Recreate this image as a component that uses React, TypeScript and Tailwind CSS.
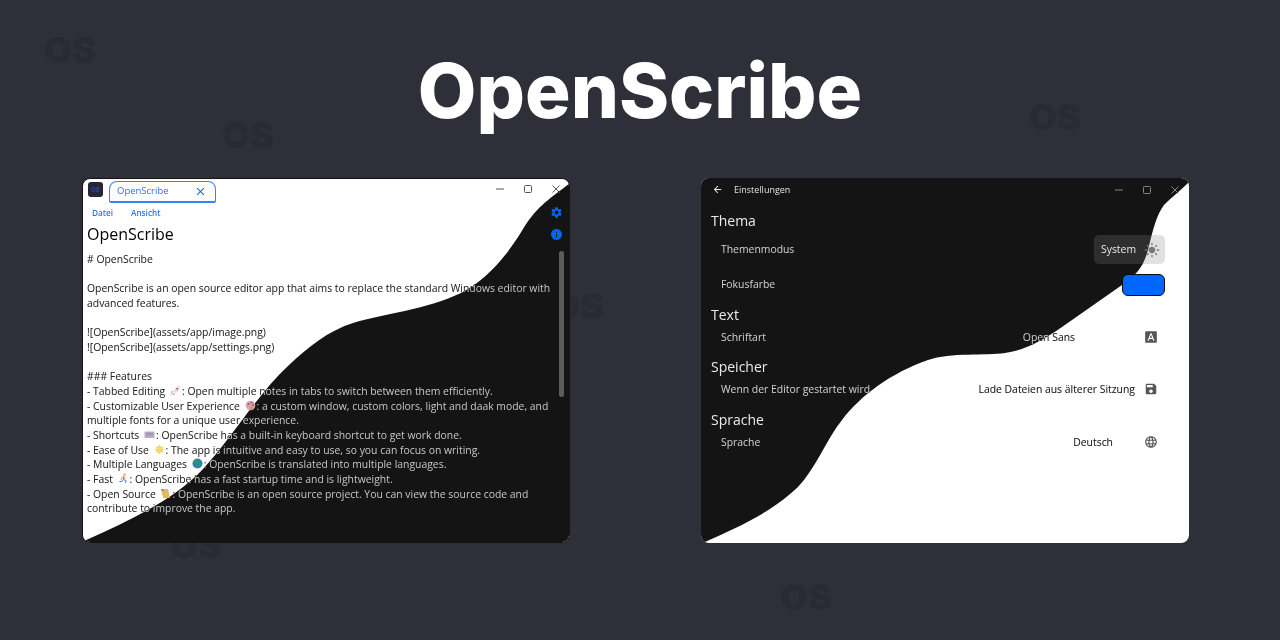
import React from "react";
import { MdSettings, MdInfo, MdClose, MdArrowBack, MdLightMode, MdFontDownload, MdSave, MdLanguage } from "react-icons/md";

const leftWave = "M1 362 C45 342 90 322 120 290 C150 258 172 218 205 187 C225 168 245 152 270 144 C300 135 345 130 378 114 C405 100 425 75 440 50 C455 25 470 18 488 3 L488 365 L0 365 Z";
const rightWave = "M4 364 C35 350 70 335 97 309 C115 290 125 262 141 242 C160 217 190 195 227 182 C250 174 285 178 304 175 C325 172 340 163 361 149 L421 107 C435 97 442 90 447 72 C452 52 455 38 463 27 C472 18 480 12 488 4 L488 0 L0 0 L0 365 Z";

function Blend({ className = "", children }: { className?: string; children: React.ReactNode }) {
  return <span className={`mix-blend-difference ${className}`}>{children}</span>;
}

function Wave({ d }: { d: string }) {
  return (
    <svg className="absolute inset-0" width="488" height="365" viewBox="0 0 488 365">
      <path d={d} fill="#141414" />
    </svg>
  );
}

const emoji = "inline-block align-[-1px] ml-[2px] mr-[1px]";
function Rocket() {
  return <svg width="11" height="11" viewBox="0 0 11 11" className={emoji}><path d="M10 1 C7 1 4 3 3 6 L5 8 C8 7 10 4 10 1Z" fill="#e8dfe6"/><path d="M3 6 L1 7 L2 8Z M5 8 L4 10 L3 9Z" fill="#d2456a"/><path d="M2 8 L3 9 L1 10Z" fill="#f08a3c"/><circle cx="7.2" cy="3.8" r="1" fill="#d2456a"/></svg>;
}
function Palette() {
  return <svg width="11" height="11" viewBox="0 0 11 11" className={emoji}><circle cx="5.5" cy="5.5" r="4.8" fill="#d8a7a0"/><circle cx="3.5" cy="4" r="1" fill="#c2435e"/><circle cx="6.5" cy="2.8" r="1" fill="#7e62b8"/><circle cx="8" cy="5.2" r="1" fill="#d2456a"/><circle cx="6.5" cy="8" r="1" fill="#6f8fc8"/></svg>;
}
function Keyboard() {
  return <svg width="11" height="11" viewBox="0 0 11 11" className={emoji}><rect x="0.5" y="2.5" width="10" height="6.5" rx="1" fill="#b5aec4"/><path d="M2 4.5H9M2 6H9" stroke="#8f88a4" strokeWidth="0.8"/></svg>;
}
function Sun() {
  return <svg width="11" height="11" viewBox="0 0 11 11" className={emoji}><path d="M5.5 0.5L6.5 3L9 2L8 4.5L10.5 5.5L8 6.5L9 9L6.5 8L5.5 10.5L4.5 8L2 9L3 6.5L0.5 5.5L3 4.5L2 2L4.5 3Z" fill="#f7c948"/><circle cx="5.5" cy="5.5" r="2.4" fill="#fbdc6a"/></svg>;
}
function Globe() {
  return <svg width="11" height="11" viewBox="0 0 11 11" className={emoji}><circle cx="5.5" cy="5.5" r="5" fill="#2f83a8"/><path d="M3 2 C5 1 7 2 6 4 C5 5 4 6 3 5 C2 4 2 3 3 2Z M7 6 C9 5 10 6 9 8 C8 9 7 9 7 6Z" fill="#2f9a5e"/></svg>;
}
function Runner() {
  return <svg width="11" height="11" viewBox="0 0 11 11" className={emoji}><circle cx="6.5" cy="1.8" r="1.2" fill="#e0a96d"/><path d="M6 3.5L4 5L3 7" stroke="#e8b04a" strokeWidth="1.2" fill="none"/><path d="M6 3.5L5.5 6.5L8 7.5L7.5 10M5.5 6.5L4 8.5L1.5 8.5" stroke="#4a7fc0" strokeWidth="1" fill="none"/><path d="M6 4.5L8.5 5.5" stroke="#e0a96d" strokeWidth="0.9"/></svg>;
}
function Scroll() {
  return <svg width="11" height="11" viewBox="0 0 11 11" className={emoji}><path d="M1 1H8L10 10H3Z" fill="#e2b765"/><path d="M1 1H3.5L4 3H1.5Z" fill="#c78f3c"/></svg>;
}

type Part = string | React.ReactNode;
const lines: (Part[] | null)[] = [
  ["# OpenScribe"],
  null,
  ["OpenScribe is an open source editor app that aims to replace the standard Windows editor with"],
  ["advanced features."],
  null,
  ["![OpenScribe](assets/app/image.png)"],
  ["![OpenScribe](assets/app/settings.png)"],
  null,
  ["### Features"],
  ["- Tabbed Editing ", <Rocket key="r" />, ": Open multiple notes in tabs to switch between them efficiently."],
  ["- Customizable User Experience ", <Palette key="p" />, ": a custom window, custom colors, light and daak mode, and"],
  ["multiple fonts for a unique user experience."],
  ["- Shortcuts ", <Keyboard key="k" />, ": OpenScribe has a built-in keyboard shortcut to get work done."],
  ["- Ease of Use ", <Sun key="s" />, ": The app is intuitive and easy to use, so you can focus on writing."],
  ["- Multiple Languages ", <Globe key="g" />, ": OpenScribe is translated into multiple languages."],
  ["- Fast ", <Runner key="f" />, ": OpenScribe has a fast startup time and is lightweight."],
  ["- Open Source ", <Scroll key="o" />, ": OpenScribe is an open source project. You can view the source code and"],
  ["contribute to improve the app."],
];

function Controls({ color }: { color: string }) {
  return (
    <div className="flex items-center gap-[16px] mix-blend-difference">
      <svg width="12" height="12" viewBox="0 0 12 12"><path d="M2 6H10" stroke={color} strokeWidth="1" /></svg>
      <svg width="12" height="12" viewBox="0 0 12 12"><rect x="2.5" y="2.5" width="7" height="7" rx="1" fill="none" stroke={color} strokeWidth="1" /></svg>
      <svg width="12" height="12" viewBox="0 0 12 12"><path d="M2.5 2.5L9.5 9.5M9.5 2.5L2.5 9.5" stroke={color} strokeWidth="1" /></svg>
    </div>
  );
}

function EditorWindow() {
  return (
    <div className="relative isolate w-[488px] h-[365px] rounded-lg overflow-hidden bg-white border border-[#141414] font-['Open_Sans',sans-serif]">
      <Wave d={leftWave} />
      <div className="relative flex flex-col -m-px">
        <div className="flex items-start h-[25px] pl-[6px] pt-[3px] pr-[7px]">
          <div className="flex items-center justify-center w-[15px] h-[15px] mt-[1px] rounded-[3px] bg-[#24243a] text-[6px] font-bold text-[#3345b5] font-['Inter',sans-serif]">OS</div>
          <div className="flex items-center justify-between w-[107px] h-[22px] ml-[6px] pl-[7px] pr-[8px] border-[1px] border-[#3b82f0] rounded-t-[8px] rounded-b-[2px] border-b-2 text-[9.5px] text-[#2a78e8]">
            <span>OpenScribe</span>
            <MdClose size={13} color="#1a6be0" />
          </div>
          <div className="ml-auto mt-[2px] mr-[1px]"><Controls color="#a8a8a8" /></div>
        </div>
        <div className="flex items-center gap-[18px] h-[20px] pl-[10px] pt-[1px] text-[8.2px] font-semibold text-[#2a78e8]">
          <span>Datei</span>
          <span>Ansicht</span>
        </div>
        <div className="pl-[5px] h-[29px] text-[16px] leading-[22px] text-black">OpenScribe</div>
        <div className="pl-[5px] text-[10.4px] leading-[14.67px] text-[#dcdcdc]">
          {lines.map((parts, i) => (
            <div key={i} className="h-[14.67px] whitespace-pre">
              {parts && parts.map((p, j) => typeof p === "string" ? <Blend key={j}>{p}</Blend> : <React.Fragment key={j}>{p}</React.Fragment>)}
            </div>
          ))}
        </div>
      </div>
      <div className="absolute left-[467px] top-[27px] text-[#0066ff]"><MdSettings size={13} /></div>
      <div className="absolute left-[467px] top-[49px] text-[#0066ff]"><MdInfo size={13} /></div>
      <div className="absolute left-[476px] top-[72px] w-[5px] h-[146px] rounded-full bg-[#5c5c5c]"></div>
    </div>
  );
}

function Row({ label, value, icon, mr, mt }: { label: string; value: string; icon: React.ReactNode; mr: string; mt: string }) {
  return (
    <div className={`flex items-center h-[22px] pl-[20px] pr-[31px] text-[10.4px] text-[#e4e4e4] ${mt}`}>
      <Blend className="pt-[2px]">{label}</Blend>
      <span className={`ml-auto pt-[2px] mix-blend-difference ${mr}`}>{value}</span>
      <span className="mix-blend-difference text-[#aaaaaa]">{icon}</span>
    </div>
  );
}

function Section({ children, className }: { children: string; className: string }) {
  return <div className={`pl-[10px] text-[14px] leading-[20px] text-white mix-blend-difference ${className}`}>{children}</div>;
}

function SettingsWindow() {
  return (
    <div className="relative isolate w-[488px] h-[365px] rounded-lg overflow-hidden bg-white font-['Open_Sans',sans-serif]">
      <Wave d={rightWave} />
      <div className="relative flex flex-col">
        <div className="flex items-center h-[23px] pl-[11px] pr-[8px] text-[9px] text-[#e4e4e4]">
          <MdArrowBack size={11} color="#eeeeee" />
          <span className="ml-[11px]">Einstellungen</span>
          <div className="ml-auto mt-[1px]"><Controls color="#9a9a9a" /></div>
        </div>
        <Section className="mt-[10px]">Thema</Section>
        <div className="flex items-center h-[29px] mt-[4px] pl-[20px] pr-[24px] text-[10.4px] text-[#e4e4e4]">
          <Blend>Themenmodus</Blend>
          <div className="ml-auto flex items-center justify-between w-[71px] h-[29px] rounded-[5px] bg-[#808080]/[.24] pl-[7px] pr-[5px] text-[#e8e8e8]">
            <span>System</span>
            <MdLightMode size={16} color="#777777" />
          </div>
        </div>
        <div className="flex items-center h-[22px] mt-[10px] pl-[20px] pr-[24px] text-[10.4px] text-[#e4e4e4]">
          <Blend>Fokusfarbe</Blend>
          <div className="ml-auto w-[43px] h-[22px] rounded-[6px] bg-[#0066ff] border border-[#0b0b14]"></div>
        </div>
        <Section className="mt-[9px]">Text</Section>
        <Row label="Schriftart" value="Open Sans" icon={<MdFontDownload size={14} />} mr="mr-[69px]" mt="mt-[1px]" />
        <Section className="mt-[9px]">Speicher</Section>
        <Row label="Wenn der Editor gestartet wird" value="Lade Dateien aus älterer Sitzung" icon={<MdSave size={14} />} mr="mr-[9px]" mt="mt-[1px]" />
        <Section className="mt-[10px]">Sprache</Section>
        <Row label="Sprache" value="Deutsch" icon={<MdLanguage size={14} />} mr="mr-[31px]" mt="mt-[1px]" />
      </div>
    </div>
  );
}

const markClass = "absolute text-[36px] leading-[44px] font-black text-[#2a2a34] font-['Inter',sans-serif]";

export default function App() {
  return (
    <div className="relative w-[1280px] h-[640px] overflow-hidden bg-[#2f2f3a]">
      <span className={`${markClass} left-[44px] top-[28px]`}>OS</span>
      <span className={`${markClass} left-[222px] top-[113px]`}>OS</span>
      <span className={`${markClass} left-[1029px] top-[95px]`}>OS</span>
      <span className={`${markClass} left-[552px] top-[284px]`}>OS</span>
      <span className={`${markClass} left-[170px] top-[523px]`}>OS</span>
      <span className={`${markClass} left-[780px] top-[575px]`}>OS</span>
      <div className="relative flex flex-col">
        <h1 className="h-[178px] pt-[46px] text-center text-[76px] leading-[88px] font-extrabold text-white font-['Inter',sans-serif]">OpenScribe</h1>
        <div className="flex gap-[131px] pl-[82px]">
          <EditorWindow />
          <SettingsWindow />
        </div>
      </div>
    </div>
  );
}
